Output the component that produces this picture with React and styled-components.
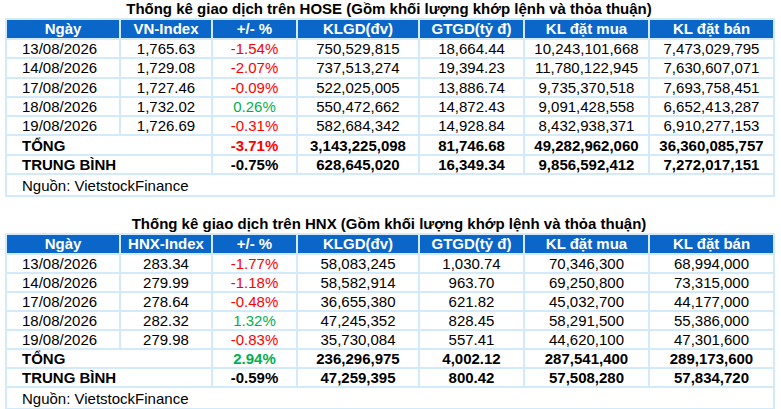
import React from 'react';
import styled, { createGlobalStyle } from 'styled-components';

const GlobalStyle = createGlobalStyle`
  html, body {
    margin: 0;
    padding: 0;
    background: #ffffff;
  }
  body {
    font-family: 'Liberation Sans', Arial, sans-serif;
    color: #000;
  }
`;

const COLS = [114, 92, 85, 122, 105, 125, 125];

const hose = {
  title: 'Thống kê giao dịch trên HOSE (Gồm khối lượng khớp lệnh và thỏa thuận)',
  index: 'VN-Index',
  rows: [
    ['13/08/2026', '1,765.63', '-1.54%', '750,529,815', '18,664.44', '10,243,101,668', '7,473,029,795'],
    ['14/08/2026', '1,729.08', '-2.07%', '737,513,274', '19,394.23', '11,780,122,945', '7,630,607,071'],
    ['17/08/2026', '1,727.46', '-0.09%', '522,025,005', '13,886.74', '9,735,370,518', '7,693,758,451'],
    ['18/08/2026', '1,732.02', '0.26%', '550,472,662', '14,872.43', '9,091,428,558', '6,652,413,287'],
    ['19/08/2026', '1,726.69', '-0.31%', '582,684,342', '14,928.84', '8,432,938,371', '6,910,277,153'],
  ],
  total: ['-3.71%', '3,143,225,098', '81,746.68', '49,282,962,060', '36,360,085,757'],
  totalTone: 'down',
  avg: ['-0.75%', '628,645,020', '16,349.34', '9,856,592,412', '7,272,017,151'],
  rowH: 17.3,
};

const hnx = {
  title: 'Thống kê giao dịch trên HNX (Gồm khối lượng khớp lệnh và thỏa thuận)',
  index: 'HNX-Index',
  rows: [
    ['13/08/2026', '283.34', '-1.77%', '58,083,245', '1,030.74', '70,346,300', '68,994,000'],
    ['14/08/2026', '279.99', '-1.18%', '58,582,914', '963.70', '69,250,800', '73,315,000'],
    ['17/08/2026', '278.64', '-0.48%', '36,655,380', '621.82', '45,032,700', '44,177,000'],
    ['18/08/2026', '282.32', '1.32%', '47,245,352', '828.45', '58,291,500', '55,386,000'],
    ['19/08/2026', '279.98', '-0.83%', '35,730,084', '557.41', '44,620,100', '47,301,600'],
  ],
  total: ['2.94%', '236,296,975', '4,002.12', '287,541,400', '289,173,600'],
  totalTone: 'up',
  avg: ['-0.59%', '47,259,395', '800.42', '57,508,280', '57,834,720'],
  rowH: 17,
};

const toneOf = (v) => (v.startsWith('-') ? 'down' : 'up');

const Page = styled.div`
  padding: 0 0 0 5px;
  display: flex;
  flex-direction: column;
  gap: 18px;
`;

const Block = styled.section`
  display: flex;
  flex-direction: column;
  width: 768px;
`;

const Title = styled.h2`
  margin: 0;
  height: 18px;
  line-height: 18px;
  text-align: center;
  font-size: 15px;
  font-weight: bold;
  color: #000;
`;

const Table = styled.table`
  border-collapse: collapse;
  table-layout: fixed;
  width: 768px;
  font-size: 15px;
`;

const Cell = styled.td`
  border: 2px solid #d3eafb;
  padding: 0;
  height: ${(p) => p.$h || 17}px;
  line-height: 17px;
  white-space: nowrap;
  text-align: ${(p) => (p.$left ? 'left' : 'center')};
  padding-left: ${(p) => (p.$left ? '15px' : '0')};
  font-weight: ${(p) => (p.$bold ? 'bold' : 'normal')};
  color: ${(p) => (p.$tone === 'down' ? '#ff0000' : p.$tone === 'up' ? '#00b050' : '#000')};
`;

const HeadCell = styled.th`
  border: 2px solid #d3eafb;
  padding: 0;
  height: 18px;
  line-height: 18px;
  background: #0a66c8;
  color: #ffffff;
  font-weight: bold;
  font-size: 15px;
`;

const StatTable = ({ data }) => {
  const heads = ['Ngày', data.index, '+/- %', 'KLGD(đv)', 'GTGD(tỷ đ)', 'KL đặt mua', 'KL đặt bán'];
  const h = data.rowH;
  return (
    <Block>
      <Title>{data.title}</Title>
      <Table>
        <colgroup>
          {COLS.map((w, i) => (
            <col key={i} style={{ width: w }} />
          ))}
        </colgroup>
        <thead>
          <tr>
            {heads.map((t) => (
              <HeadCell key={t}>{t}</HeadCell>
            ))}
          </tr>
        </thead>
        <tbody>
          {data.rows.map((r) => (
            <tr key={r[0]}>
              <Cell $h={h} $left>{r[0]}</Cell>
              <Cell $h={h}>{r[1]}</Cell>
              <Cell $h={h} $tone={toneOf(r[2])}>{r[2]}</Cell>
              {r.slice(3).map((v, i) => (
                <Cell $h={h} key={i}>{v}</Cell>
              ))}
            </tr>
          ))}
          <tr>
            <Cell $h={h} $left $bold colSpan={2}>TỔNG</Cell>
            <Cell $h={h} $bold $tone={data.totalTone}>{data.total[0]}</Cell>
            {data.total.slice(1).map((v, i) => (
              <Cell $h={h} key={i} $bold>{v}</Cell>
            ))}
          </tr>
          <tr>
            <Cell $h={h} $left $bold colSpan={2}>TRUNG BÌNH</Cell>
            {data.avg.map((v, i) => (
              <Cell $h={h} key={i} $bold>{v}</Cell>
            ))}
          </tr>
          <tr>
            <Cell $h={20} $left colSpan={7}>Nguồn: VietstockFinance</Cell>
          </tr>
        </tbody>
      </Table>
    </Block>
  );
};

export default function App() {
  return (
    <>
      <GlobalStyle />
      <Page>
        <StatTable data={hose} />
        <StatTable data={hnx} />
      </Page>
    </>
  );
}
